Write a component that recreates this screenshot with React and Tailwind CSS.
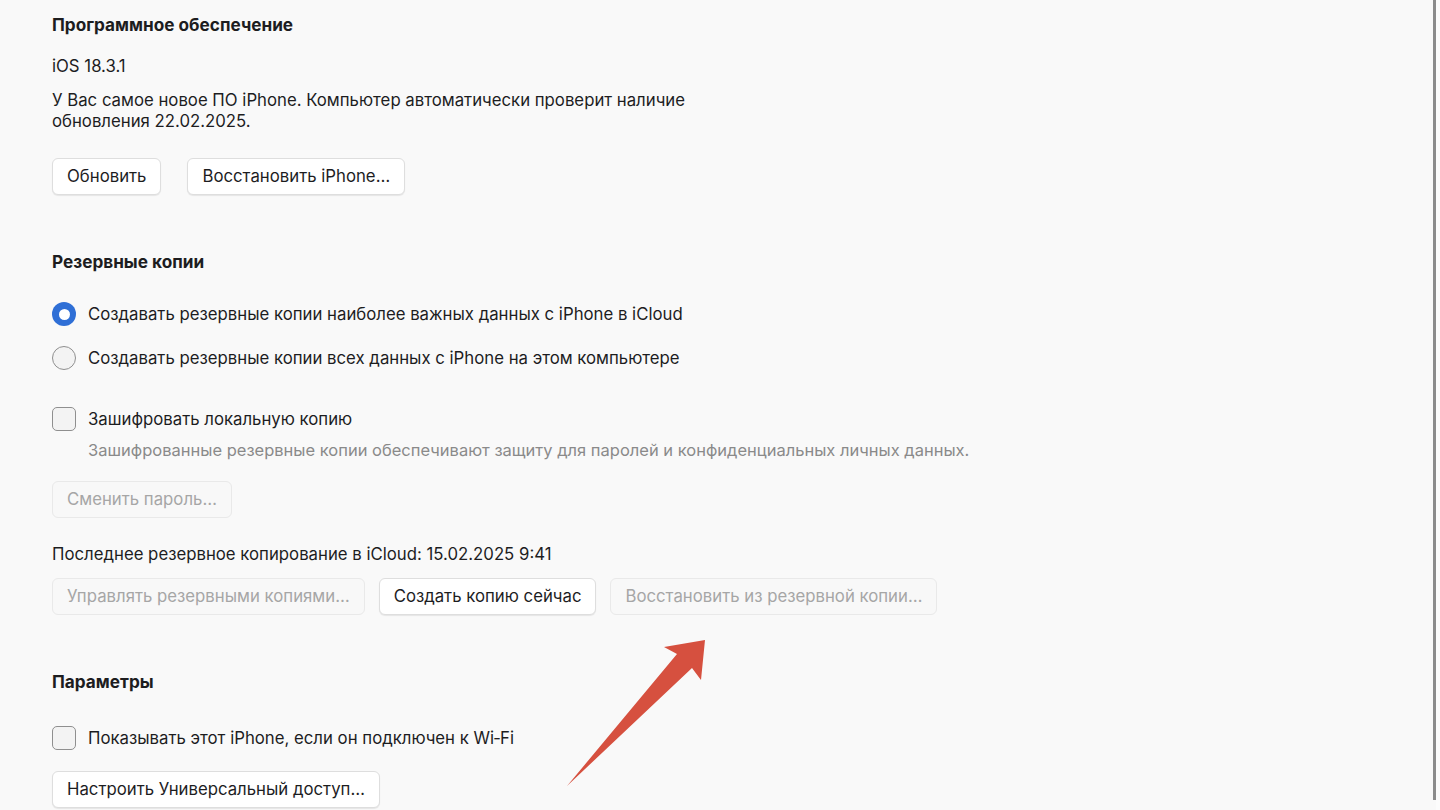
import React from "react";

const font = { fontFamily: "Inter, 'Noto Sans', sans-serif" };

function Button({ children, disabled, className = "" }) {
  return (
    <button
      disabled={disabled}
      className={
        "h-[37px] px-[14px] rounded-[6px] border text-[16.75px] whitespace-nowrap " +
        (disabled
          ? "border-[#e9e9e9] bg-[#f8f8f8] text-[#a6a6a6]"
          : "border-[#dedede] bg-white text-[#1d1d1f] shadow-[0_1px_1px_rgba(0,0,0,0.08)]") +
        " " +
        className
      }
    >
      {children}
    </button>
  );
}

function Radio({ checked, label }) {
  return (
    <div className="flex items-center gap-3">
      {checked ? (
        <span className="w-6 h-6 rounded-full bg-[#2f6fd6] flex items-center justify-center">
          <span className="w-[11px] h-[11px] rounded-full bg-white" />
        </span>
      ) : (
        <span className="w-6 h-6 rounded-full border border-[#8f8f8f] bg-[#f3f3f3]" />
      )}
      <span className="text-[16.75px] leading-[24px] text-[#1d1d1f]">{label}</span>
    </div>
  );
}

function Checkbox({ label }) {
  return (
    <div className="flex items-center gap-3">
      <span className="w-6 h-6 rounded-[5px] border border-[#8f8f8f] bg-[#f3f3f3]" />
      <span className="text-[16.75px] leading-[24px] text-[#1d1d1f]">{label}</span>
    </div>
  );
}

function Heading({ children, className = "" }) {
  return (
    <h2 className={"text-[17.2px] leading-[22px] font-bold text-[#1d1d1f] " + className}>
      {children}
    </h2>
  );
}

export default function App() {
  return (
    <div className="w-[1440px] h-[810px] overflow-hidden bg-[#f9f9f9] flex relative" style={font}>
      <div className="flex-1 pl-[52px] pt-[14px] text-[#1d1d1f]">
        <Heading>Программное обеспечение</Heading>
        <p className="mt-[19px] text-[16.75px] leading-[22px]">iOS 18.3.1</p>
        <p className="mt-[13px] text-[16.75px] leading-[21px] w-[660px]">
          У Вас самое новое ПО iPhone. Компьютер автоматически проверит наличие
          <br />
          обновления 22.02.2025.
        </p>
        <div className="mt-[26px] flex gap-[26px]">
          <Button>Обновить</Button>
          <Button>Восстановить iPhone…</Button>
        </div>

        <Heading className="mt-[56px]">Резервные копии</Heading>
        <div className="mt-[29px] flex flex-col gap-5">
          <Radio checked label="Создавать резервные копии наиболее важных данных с iPhone в iCloud" />
          <Radio label="Создавать резервные копии всех данных с iPhone на этом компьютере" />
        </div>
        <div className="mt-[37px]">
          <Checkbox label="Зашифровать локальную копию" />
          <p className="mt-[9px] pl-9 text-[16.5px] leading-[20px] text-[#8a8a8a]">
            Зашифрованные резервные копии обеспечивают защиту для паролей и конфиденциальных личных данных.
          </p>
        </div>
        <div className="mt-[21px]">
          <Button disabled>Сменить пароль…</Button>
        </div>
        <p className="mt-[25px] text-[16.75px] leading-[22px]">
          Последнее резервное копирование в iCloud: 15.02.2025 9:41
        </p>
        <div className="mt-[13px] flex gap-[14px]">
          <Button disabled>Управлять резервными копиями…</Button>
          <Button>Создать копию сейчас</Button>
          <Button disabled>Восстановить из резервной копии…</Button>
        </div>

        <Heading className="mt-[56px]">Параметры</Heading>
        <div className="mt-[33px]">
          <Checkbox label="Показывать этот iPhone, если он подключен к Wi‑Fi" />
        </div>
        <div className="mt-[21px]">
          <Button>Настроить Универсальный доступ…</Button>
        </div>
      </div>
      <div className="w-[3px] h-[800px] bg-[#8c8c8c]" />
      <div className="w-[4px] bg-[#fcfcfc]" />

      <svg className="absolute left-0 top-0 pointer-events-none" width="1440" height="810">
        <polygon
          points="567,786 677,654 664,647 705,640 701,680 692,668"
          fill="#d6503f"
        />
      </svg>
    </div>
  );
}
